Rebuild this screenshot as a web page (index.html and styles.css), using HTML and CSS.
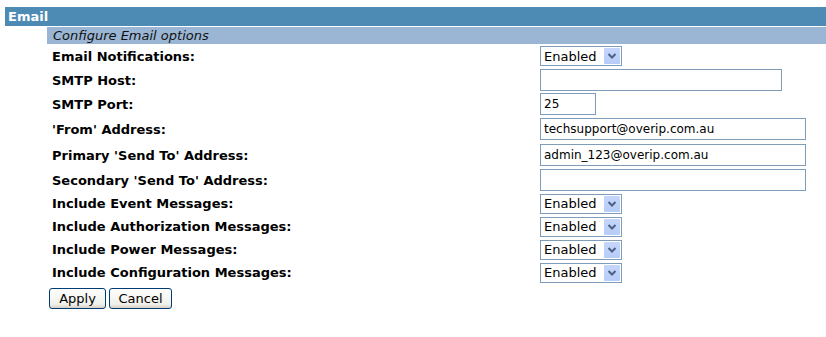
FILE: index.html
```html
<!DOCTYPE html>
<html lang="en">
<head>
    <meta charset="UTF-8">
    <title>Email</title>
    <link rel="stylesheet" href="styles.css">
</head>
<body>
    <div class="section-title">Email</div>
    <div class="section-body">
        <div class="section-sub">Configure Email options</div>

        <form class="email-form" autocomplete="off">
            <div class="row">
                <label class="label">Email Notifications:</label>
                <div class="select-wrap">
                    <select class="field-select"><option>Enabled</option><option>Disabled</option></select>
                    <svg class="select-btn" width="16" height="16" viewBox="0 0 16 16"><path d="M4.5 6 L8 9.5 L11.5 6" fill="none" stroke="#4d6185" stroke-width="2"/></svg>
                </div>
            </div>
            <div class="row">
                <label class="label">SMTP Host:</label>
                <input type="text" class="field-text wide-short" value="">
            </div>
            <div class="row">
                <label class="label">SMTP Port:</label>
                <input type="text" class="field-text port" value="25">
            </div>
            <div class="row tall">
                <label class="label">'From' Address:</label>
                <input type="text" class="field-text wide" value="techsupport@overip.com.au">
            </div>
            <div class="row tall">
                <label class="label">Primary 'Send To' Address:</label>
                <input type="text" class="field-text wide" value="admin_123@overip.com.au">
            </div>
            <div class="row">
                <label class="label">Secondary 'Send To' Address:</label>
                <input type="text" class="field-text wide" value="">
            </div>
            <div class="row short">
                <label class="label">Include Event Messages:</label>
                <div class="select-wrap">
                    <select class="field-select"><option>Enabled</option><option>Disabled</option></select>
                    <svg class="select-btn" width="16" height="16" viewBox="0 0 16 16"><path d="M4.5 6 L8 9.5 L11.5 6" fill="none" stroke="#4d6185" stroke-width="2"/></svg>
                </div>
            </div>
            <div class="row short">
                <label class="label">Include Authorization Messages:</label>
                <div class="select-wrap">
                    <select class="field-select"><option>Enabled</option><option>Disabled</option></select>
                    <svg class="select-btn" width="16" height="16" viewBox="0 0 16 16"><path d="M4.5 6 L8 9.5 L11.5 6" fill="none" stroke="#4d6185" stroke-width="2"/></svg>
                </div>
            </div>
            <div class="row short">
                <label class="label">Include Power Messages:</label>
                <div class="select-wrap">
                    <select class="field-select"><option>Enabled</option><option>Disabled</option></select>
                    <svg class="select-btn" width="16" height="16" viewBox="0 0 16 16"><path d="M4.5 6 L8 9.5 L11.5 6" fill="none" stroke="#4d6185" stroke-width="2"/></svg>
                </div>
            </div>
            <div class="row short">
                <label class="label">Include Configuration Messages:</label>
                <div class="select-wrap">
                    <select class="field-select"><option>Enabled</option><option>Disabled</option></select>
                    <svg class="select-btn" width="16" height="16" viewBox="0 0 16 16"><path d="M4.5 6 L8 9.5 L11.5 6" fill="none" stroke="#4d6185" stroke-width="2"/></svg>
                </div>
            </div>

            <div class="buttons">
                <button type="submit" class="btn btn-apply">Apply</button>
                <button type="button" class="btn btn-cancel">Cancel</button>
            </div>
        </form>
    </div>
</body>
</html>
```
FILE: styles.css
```css
* {
    margin: 0;
    padding: 0;
    box-sizing: border-box;
}

body {
    font-family: "DejaVu Sans", sans-serif;
    font-size: 13px;
    background: white;
    color: #000;
    padding: 7px 0 0 5px;
}

.section-title {
    background: #4d8bb5;
    color: white;
    font-weight: bold;
    font-size: 13px;
    height: 19px;
    line-height: 19px;
    padding-left: 3px;
}

.section-body {
    margin-left: 42px;
    margin-top: 1px;
}

.section-sub {
    background: #9ab6d4;
    color: #111;
    font-style: italic;
    height: 17px;
    line-height: 17px;
    padding-left: 6px;
}

.row {
    display: flex;
    align-items: center;
    height: 24px;
}

.row.tall {
    height: 26px;
}

.row.short {
    height: 23px;
}

.label {
    width: 493px;
    padding-left: 5px;
    font-weight: bold;
}

.field-text {
    font-family: inherit;
    font-size: 12px;
    height: 22px;
    border: 1px solid #7f9db9;
    padding: 0 3px;
    background: white;
}

.wide-short {
    width: 242px;
}

.wide {
    width: 266px;
}

.port {
    width: 56px;
}

.select-wrap {
    position: relative;
    width: 82px;
    height: 20px;
}

.field-select {
    appearance: none;
    -webkit-appearance: none;
    width: 100%;
    height: 100%;
    border: 1px solid #7f9db9;
    background: white;
    font-family: inherit;
    font-size: 13px;
    padding: 0 3px;
    color: #000;
}

.select-btn {
    position: absolute;
    right: 2px;
    top: 2px;
    background: linear-gradient(#c6d6fb, #b6cdf7);
    border-radius: 1px;
    pointer-events: none;
}

.buttons {
    display: flex;
    gap: 3px;
    padding: 4px 0 0 2px;
}

.btn {
    font-family: inherit;
    font-size: 13px;
    height: 21px;
    border: 1px solid #003c74;
    border-radius: 3px;
    background: linear-gradient(#fefefe, #f0f0ea 80%, #d6d0c5);
    color: #000;
    cursor: pointer;
}

.btn-apply {
    width: 57px;
}

.btn-cancel {
    width: 63px;
}
```
